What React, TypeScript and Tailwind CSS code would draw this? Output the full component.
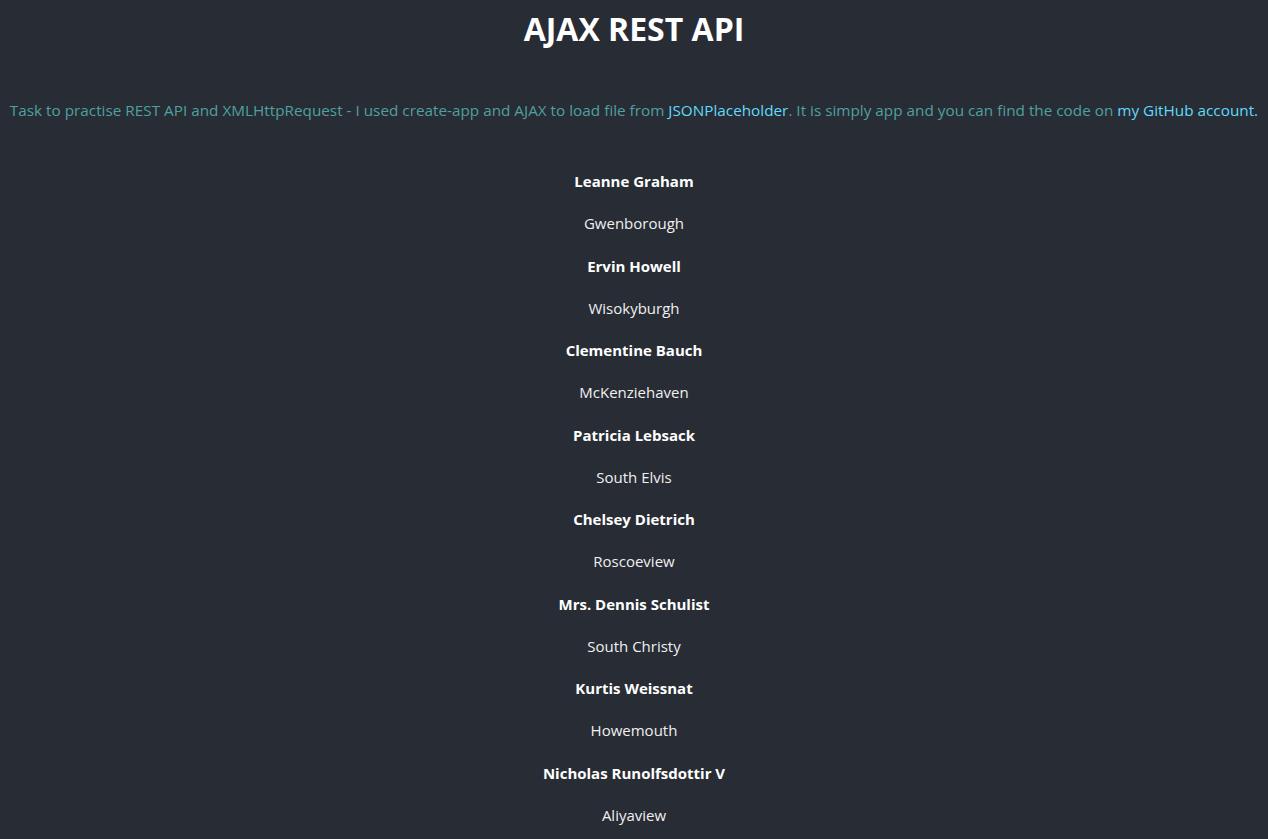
export default function App() {
  const users = [
    ["Leanne Graham", "Gwenborough"],
    ["Ervin Howell", "Wisokyburgh"],
    ["Clementine Bauch", "McKenziehaven"],
    ["Patricia Lebsack", "South Elvis"],
    ["Chelsey Dietrich", "Roscoeview"],
    ["Mrs. Dennis Schulist", "South Christy"],
    ["Kurtis Weissnat", "Howemouth"],
    ["Nicholas Runolfsdottir V", "Aliyaview"],
  ];
  return (
    <div
      className="min-h-screen bg-[#282c34] text-center text-white"
      style={{ fontFamily: '"Open Sans", "Noto Sans", sans-serif' }}
    >
      <h1 className="pt-[7px] text-[32px] font-bold leading-[43px] text-white">AJAX REST API</h1>
      <p className="mt-[50px] whitespace-nowrap text-[15.3px] leading-[21px] text-[#4fa0a0]">
        Task to practise REST API and XMLHttpRequest - I used create-app and AJAX to load file from{" "}
        <a className="text-[#61dafb]">JSONPlaceholder</a>. It is simply app and you can find the code on{" "}
        <a className="text-[#61dafb]">my GitHub account.</a>
      </p>
      <div className="mt-[50px] flex flex-col gap-[21.27px] text-[15px] leading-[21px]">
        {users.map(([n, c]) => (
          <div key={n} className="contents">
            <div className="font-bold">{n}</div>
            <div className="text-[#f0f0f0]">{c}</div>
          </div>
        ))}
      </div>
    </div>
  );
}
